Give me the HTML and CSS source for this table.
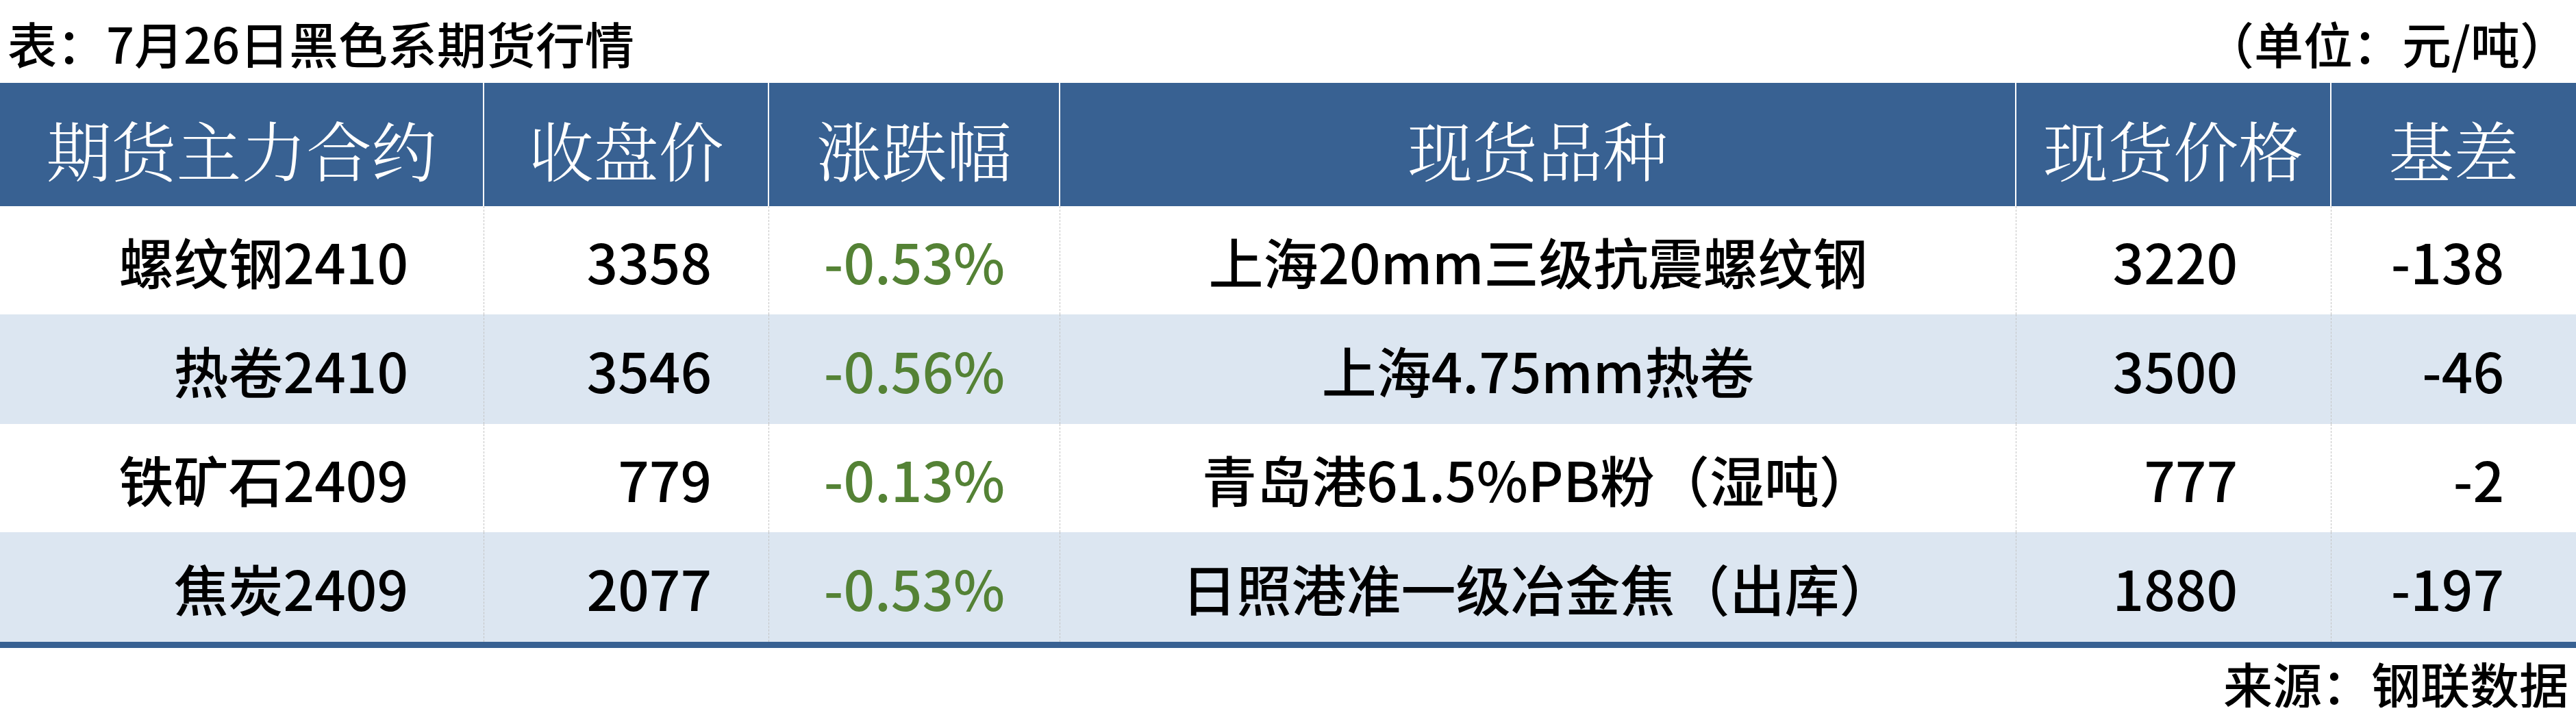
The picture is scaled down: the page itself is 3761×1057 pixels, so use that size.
FILE: index.html
```html
<!DOCTYPE html>
<html lang="zh-CN">
<head>
<meta charset="utf-8">
<title>7月26日黑色系期货行情</title>
<link rel="stylesheet" href="styles.css">
</head>
<body>
<div class="page">
  <div class="title-bar">
    <div class="title">表：7月26日黑色系期货行情</div>
    <div class="unit">（单位：元/吨）</div>
  </div>
  <div class="table">
    <div class="hcell">期货主力合约</div>
    <div class="hcell">收盘价</div>
    <div class="hcell">涨跌幅</div>
    <div class="hcell">现货品种</div>
    <div class="hcell">现货价格</div>
    <div class="hcell last">基差</div>

    <div class="row r-a">
      <div class="cell c1">螺纹钢2410</div>
      <div class="cell c2">3358</div>
      <div class="cell c3">-0.53%</div>
      <div class="cell c4">上海20mm三级抗震螺纹钢</div>
      <div class="cell c5">3220</div>
      <div class="cell c6">-138</div>
    </div>
    <div class="row r-b">
      <div class="cell c1">热卷2410</div>
      <div class="cell c2">3546</div>
      <div class="cell c3">-0.56%</div>
      <div class="cell c4">上海4.75mm热卷</div>
      <div class="cell c5">3500</div>
      <div class="cell c6">-46</div>
    </div>
    <div class="row r-c">
      <div class="cell c1">铁矿石2409</div>
      <div class="cell c2">779</div>
      <div class="cell c3">-0.13%</div>
      <div class="cell c4">青岛港61.5%PB粉（湿吨）</div>
      <div class="cell c5">777</div>
      <div class="cell c6">-2</div>
    </div>
    <div class="row r-d">
      <div class="cell c1">焦炭2409</div>
      <div class="cell c2">2077</div>
      <div class="cell c3">-0.53%</div>
      <div class="cell c4">日照港准一级冶金焦（出库）</div>
      <div class="cell c5">1880</div>
      <div class="cell c6">-197</div>
    </div>
  </div>
  <div class="source">来源：钢联数据</div>
</div>
</body>
</html>
```

FILE: styles.css
```css
html, body {
  margin: 0;
  padding: 0;
  background: #ffffff;
}

.page {
  width: 3761px;
  font-family: "Noto Sans CJK SC", "Noto Sans", sans-serif;
  color: #000000;
}

.title-bar {
  height: 121px;
  box-sizing: border-box;
  padding: 26px 10px 0 11px;
  display: flex;
  justify-content: space-between;
  align-items: flex-start;
  font-size: 72px;
  line-height: 1;
  font-weight: 500;
}

.table {
  display: grid;
  grid-template-columns: 707px 416px 425px 1396px 460px 357px;
}

.hcell {
  height: 180px;
  box-sizing: border-box;
  background: #386192;
  color: #ffffff;
  border-right: 2px solid #ffffff;
  display: flex;
  align-items: center;
  justify-content: center;
  padding-top: 12px;
  font-family: "Noto Serif CJK SC", "Noto Sans CJK SC", serif;
  font-size: 95px;
  line-height: 1;
  font-weight: 300;
}

.hcell.last {
  border-right: none;
}

.row {
  display: contents;
}

.cell {
  box-sizing: border-box;
  display: flex;
  align-items: center;
  font-size: 80px;
  line-height: 1;
  font-weight: 500;
  border-right: 1px dashed #c4c4c4;
}

.r-a .cell { height: 158px; background: #ffffff; }
.r-b .cell { height: 160px; background: #dce6f1; }
.r-c .cell { height: 158px; background: #ffffff; }
.r-d .cell { height: 160px; background: #dce6f1; }

.c1 { justify-content: flex-end; padding-right: 110px; }
.c2 { justify-content: flex-end; padding-right: 83px; }
.c3 { justify-content: center; color: #548235; }
.c4 { justify-content: center; }
.c5 { justify-content: flex-end; padding-right: 136px; }
.c6 { justify-content: flex-end; padding-right: 105px; border-right: none; }

.source {
  border-top: 9px solid #386192;
  padding: 15px 11px 0 0;
  text-align: right;
  font-size: 72px;
  line-height: 1;
  font-weight: 500;
}
```
